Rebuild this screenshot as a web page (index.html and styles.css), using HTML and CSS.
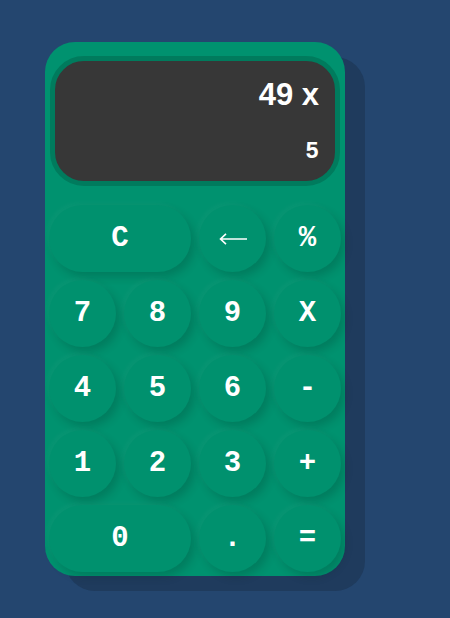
FILE: index.html
```html
<!DOCTYPE html>
<html>
<head>
<meta charset="utf-8">
<link rel="stylesheet" href="styles.css">
</head>
<body>
<div class="calc">
  <div class="display">
    <div class="expr">49 x</div>
    <div class="current">5</div>
  </div>
  <div class="keys">
    <button class="key wide">C</button>
    <button class="key arrow"><svg class="arrow-icon" width="30" height="14" viewBox="0 0 30 14"><path d="M29 7H2.5M8 1.8L2.5 7L8 12.2" fill="none" stroke="#ffffff" stroke-width="1.6"/></svg></button>
    <button class="key">%</button>
    <button class="key">7</button>
    <button class="key">8</button>
    <button class="key">9</button>
    <button class="key">X</button>
    <button class="key">4</button>
    <button class="key">5</button>
    <button class="key">6</button>
    <button class="key">-</button>
    <button class="key">1</button>
    <button class="key">2</button>
    <button class="key">3</button>
    <button class="key">+</button>
    <button class="key wide">0</button>
    <button class="key">.</button>
    <button class="key">=</button>
  </div>
</div>
</body>
</html>
```
FILE: styles.css
```css
html, body {
  margin: 0;
  padding: 0;
}
body {
  background: #24466f;
  width: 450px;
  height: 618px;
  overflow: hidden;
}
.calc {
  margin: 42px 0 0 45px;
  width: 300px;
  height: 534px;
  box-sizing: border-box;
  padding: 14px 4px 0 4px;
  background: #00926f;
  border-radius: 30px;
  box-shadow: 20px 15px 0 #1f3b5d;
}
.display {
  margin: 0 1px;
  height: 130px;
  box-sizing: border-box;
  border: 5px solid #007b5d;
  background: #373737;
  border-radius: 34px;
  padding: 16px 16px 0 0;
  text-align: right;
  color: #ffffff;
}
.expr {
  font-family: "Liberation Sans", Arial, sans-serif;
  font-weight: bold;
  font-size: 31px;
  line-height: 36px;
}
.current {
  margin-top: 26px;
  font-family: "Liberation Mono", "Courier New", monospace;
  font-weight: bold;
  font-size: 23px;
  line-height: 26px;
}
.keys {
  margin-top: 19px;
  display: grid;
  grid-template-columns: repeat(4, 67px);
  grid-auto-rows: 67px;
  gap: 8px;
}
.key {
  border: none;
  padding: 0;
  margin: 0;
  background: #00916e;
  color: #ffffff;
  border-radius: 34px;
  font-family: "Liberation Mono", "Courier New", monospace;
  font-weight: bold;
  font-size: 29px;
  box-shadow: 4px 5px 9px rgba(0, 40, 30, 0.2), -2px -2px 5px rgba(255, 255, 255, 0.04);
}
.key.wide {
  grid-column: span 2;
}
.key.arrow {
  display: flex;
  align-items: center;
  justify-content: center;
}
.arrow-icon {
  display: block;
}
```
